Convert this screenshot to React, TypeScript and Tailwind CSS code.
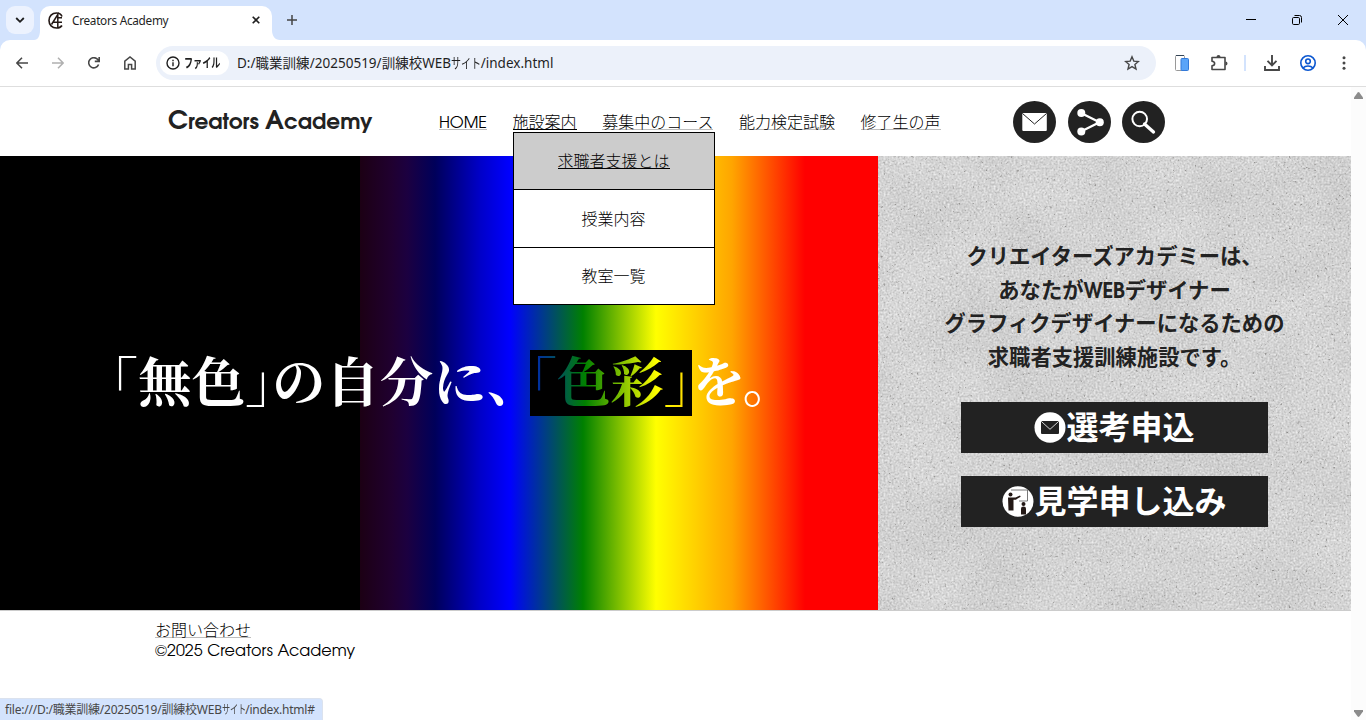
import React from "react";

const ui = "font-['Noto_Sans','Noto_Sans_CJK_JP',sans-serif]";
const gothic =
  "font-['Century_Gothic','URW_Gothic','TeX_Gyre_Adventor','Lato','Noto_Sans_CJK_JP',sans-serif]";

function TabStrip() {
  return (
    <div className="flex h-10 bg-[#d3e3fd] pl-1.5">
      <div className="mt-1.5 flex h-7 w-7 items-center justify-center rounded-[9px] bg-[#ecf2fe]">
        <svg width="10" height="8" viewBox="0 0 10 8" fill="none" stroke="#1f1f1f" strokeWidth="1.8">
          <path d="M1.2 2 5 5.8 8.800 2" />
        </svg>
      </div>
      <svg className="mt-[30px]" width="6" height="10" viewBox="0 0 6 10">
        <path d="M6 0v10H0c4 0 6-4 6-10Z" fill="#fff" />
      </svg>
      <div className="mt-1.5 flex h-[34px] w-[232px] items-center rounded-t-[10px] bg-white pb-1.5 pl-2">
        <svg width="16" height="17" viewBox="0 0 16 17" fill="none" stroke="#231815" strokeWidth="1.600">
          <path d="M14 4.500C13 1.800 11 1 8.500 1 4 1 1 4.300 1 8.500S4 16 8.500 16c2.500 0 4.500-1 5.500-2.500" />
          <path d="M3.500 12.500 9.800 2.500V16M4.500 10.300H14M10 5.700h4" strokeWidth="1.500" />
        </svg>
        <span className="ml-2 flex-1 pt-px text-[11.800px] tracking-[-0.3px] text-[#1f1f1f]">Creators Academy</span>
        <svg className="mr-3" width="8" height="8" viewBox="0 0 8 8" stroke="#1f1f1f" strokeWidth="1.600">
          <path d="m.7.7 6.600 6.600M7.300.7.7 7.300" />
        </svg>
      </div>
      <svg className="mt-[30px]" width="8" height="10" viewBox="0 0 8 10">
        <path d="M0 0v10h8C3 10 0 6 0 0Z" fill="#fff" />
      </svg>
      <svg className="ml-[7px] mt-[15px]" width="10" height="10" viewBox="0 0 10 10" stroke="#444" strokeWidth="1.500">
        <path d="M5 0v10M0 5h10" />
      </svg>
      <div className="ml-auto mr-[18px] flex h-10 items-center gap-9">
        <svg width="10" height="10" viewBox="0 0 10 10" stroke="#000">
          <path d="M0 4.500h10" />
        </svg>
        <svg width="10" height="10" viewBox="0 0 10 10" fill="none" stroke="#000">
          <rect x=".5" y="2.500" width="7" height="7" rx="1.200" />
          <path d="M2.500.5h5a2 2 0 0 1 2 2v5" />
        </svg>
        <svg width="10" height="10" viewBox="0 0 10 10" stroke="#000">
          <path d="m0 0 10 10M10 0 0 10" />
        </svg>
      </div>
    </div>
  );
}

function Toolbar() {
  return (
    <div className="bg-[#d3e3fd]">
      <div className="flex h-[47px] items-center rounded-t-[10px] border-b border-[#dedede] bg-white pl-4 text-[#474747]">
        <svg width="12" height="12" viewBox="0 0 12 12" fill="none" stroke="#474747" strokeWidth="1.500">
          <path d="M12 6H1M6 .7.900 6 6 11.300" />
        </svg>
        <svg className="ml-6" width="12" height="12" viewBox="0 0 12 12" fill="none" stroke="#b0b0b0" strokeWidth="1.500">
          <path d="M0 6h11M6 .7 11.100 6 6 11.300" />
        </svg>
        <svg className="ml-6" width="12" height="12" viewBox="0 0 12 12" fill="none" stroke="#474747" strokeWidth="1.600">
          <path d="M10.600 7.500A5.100 5.100 0 1 1 9.800 2.600L11 4M11.200 0v4.400H6.800" />
        </svg>
        <svg className="ml-6" width="12" height="14" viewBox="0 0 12 14" fill="none" stroke="#474747" strokeWidth="1.500">
          <path d="M.8 13V5.200L6 1l5.200 4.200V13H7.600V8.500H4.400V13H.8Z" />
        </svg>
        <div className="ml-5 flex h-[34px] w-[1000px] items-center rounded-full bg-[#ecf1fa] pl-1">
          <div className="flex h-6 w-[69px] shrink-0 items-center rounded-full bg-white pl-1.5 text-[#1f1f1f]">
            <svg className="shrink-0" width="14" height="14" viewBox="0 0 14 14" fill="none" stroke="#1f1f1f" strokeWidth="1.400">
              <circle cx="7" cy="7" r="6" />
              <path d="M7 6.200V10.200M7 3.700v1.500" />
            </svg>
            <span className={`${ui} ml-1 w-9 origin-left scale-x-[0.7] whitespace-nowrap text-[13px] font-bold`}>ファイル</span>
          </div>
          <span className="ml-2 flex-1 whitespace-nowrap text-[13.500px] tracking-[0.02px] text-[#1f1f1f]">
            D:/職業訓練/20250519/訓練校WEB
            <span className="-mr-[11px] inline-block origin-left scale-x-[0.74]">サイト</span>
            /index.html
          </span>
          <svg className="mr-4" width="16" height="16" viewBox="0 0 16 16" fill="none" stroke="#474747" strokeWidth="1.400">
            <path d="m8 1.800 1.800 4.300 4.600.4-3.500 3 1.100 4.600L8 11.600 4 14.100l1.100-4.600-3.500-3 4.600-.4Z" />
          </svg>
        </div>
        <svg className="ml-[19px]" width="14" height="16" viewBox="0 0 14 16">
          <rect x=".5" y=".5" width="9" height="15" rx="1" fill="#fff" stroke="#999" />
          <path d="M1 .5h8" stroke="#345" />
          <rect x="6" y="3.500" width="7.500" height="12" rx="1" fill="#5aa4f8" stroke="#3379d8" />
        </svg>
        <svg className="ml-[21px]" width="18" height="18" viewBox="0 0 18 18" fill="none">
          <path d="M2 3.500h13V9v6.500H2v-3.700c3.500-.3 3.500-4.200 0-4.500Z" stroke="#474747" strokeWidth="1.600" strokeLinejoin="round" />
          <path d="M6.500 3a2 2 0 0 1 4 0ZM15.500 7.500a2 2 0 0 1 0 4Z" fill="#474747" />
        </svg>
        <div className="ml-4 h-4 w-0.5 bg-[#d3e3fd]" />
        <svg className="ml-[18px]" width="16" height="16" viewBox="0 0 16 16" fill="none" stroke="#474747" strokeWidth="1.900">
          <path d="M8 0v10M3.500 5.800 8 10.300l4.500-4.500M1 11v4h14v-4" />
        </svg>
        <svg className="ml-5" width="16" height="16" viewBox="0 0 16 16" fill="none" stroke="#0b57d0" strokeWidth="1.600">
          <circle cx="8" cy="8" r="7.200" />
          <circle cx="8" cy="6.300" r="2.300" />
          <path d="M3 13c2.500-2.700 7.500-2.700 10 0" />
        </svg>
        <svg className="ml-[26px]" width="4" height="14" viewBox="0 0 4 14" fill="#474747">
          <circle cx="2" cy="1.700" r="1.500" />
          <circle cx="2" cy="7" r="1.500" />
          <circle cx="2" cy="12.300" r="1.500" />
        </svg>
      </div>
    </div>
  );
}

const navLink = "block h-[18px] whitespace-nowrap border-b text-[16px] leading-[23px]";

function SiteHeader() {
  return (
    <header className="flex h-[69px] pl-[168px] text-black">
      <h1 className="w-[271px] whitespace-nowrap pt-[17px] text-[21.600px] font-bold leading-9 text-[#222]">
        <span className="text-[25.600px]">C</span>reators <span className="text-[25.600px]">A</span>cademy
      </h1>
      <nav className="flex items-start gap-[25.600px] pt-[25px] font-light">
        <a className={`${navLink} w-12 border-[#bdbdbd] tracking-[-0.1px]`}>HOME</a>
        <div className="relative">
          <a className={`${navLink} border-black`}>施設案内</a>
          <ul className="absolute left-0 top-[20px] z-10 w-[202px] border border-black bg-white text-center text-[16px] leading-6">
            <li className="flex h-[57px] items-center justify-center border-b border-black bg-[#ccc]">
              <span className={`${navLink} mb-0.5 border-black`}>求職者支援とは</span>
            </li>
            <li className="flex h-[58px] items-center justify-center border-b border-black pt-1">授業内容</li>
            <li className="flex h-14 items-center justify-center pt-1">教室一覧</li>
          </ul>
        </div>
        <a className={`${navLink} border-[#bdbdbd]`}>募集中のコース</a>
        <a className={`${navLink} border-[#bdbdbd]`}>能力検定試験</a>
        <a className={`${navLink} border-[#bdbdbd]`}>修了生の声</a>
      </nav>
      <div className="ml-[72.600px] flex gap-[11.500px] pt-3.5">
        <svg width="43" height="42" viewBox="0 0 43 42">
          <ellipse cx="21.500" cy="21" rx="21.500" ry="21" fill="#222" />
          <rect x="9.300" y="12" width="24.500" height="18" rx="1" fill="#fff" />
          <path d="m9.500 12.500 12 10.500 12-10.500" fill="none" stroke="#222" />
        </svg>
        <svg width="43" height="42" viewBox="0 0 43 42" fill="#fff">
          <ellipse cx="21.500" cy="21" rx="21.500" ry="21" fill="#222" />
          <path d="m13.500 12.200 18 9-18 9" fill="none" stroke="#fff" strokeWidth="2.300" />
          <circle cx="13.300" cy="12" r="4" />
          <circle cx="31.800" cy="21.300" r="4" />
          <circle cx="13.300" cy="30.500" r="4" />
        </svg>
        <svg width="43" height="42" viewBox="0 0 43 42" fill="none" stroke="#fff">
          <ellipse cx="21.500" cy="21" rx="21.500" ry="21" fill="#222" stroke="none" />
          <circle cx="17.700" cy="18" r="7.300" strokeWidth="2" />
          <path d="m22.500 23 9 8" strokeWidth="3.300" strokeLinecap="round" />
        </svg>
      </div>
    </header>
  );
}

const clip =
  "bg-[linear-gradient(90deg,#00f_-20px,#008000_55px,#ff0_127px,#ffa500_202px)] bg-clip-text text-transparent";

function Spectrum() {
  return (
    <section className="w-[878px] bg-[linear-gradient(90deg,#000_360px,#1c0014_360px,#200030_392px,#1c0040_407px,#00005a_435px,#0000c8_480px,#00f_510px,#008000_583px,#ff0_656px,#ffa500_732px,#f00_805px)] pt-[194px]">
      <p className="flex h-[66px] items-center whitespace-nowrap pl-[111px] font-['Noto_Serif_CJK_JP','Noto_Serif_JP','Source_Han_Serif','IPAMincho','Noto_Sans_CJK_JP',serif] text-[53.500px] font-bold leading-[58px] text-white [font-feature-settings:'halt']">
        <span className="-mt-2 w-[419px] tracking-[0.150px]">「無色」の自分に、</span>
        <span className="h-[66px] w-[162px] bg-black">
          <span className={`${clip} block h-[66px]`}>「色彩」</span>
        </span>
        <span className="-mt-2 tracking-[-3px]">を。</span>
      </p>
    </section>
  );
}

function Concrete() {
  return (
    <svg className="absolute inset-0" width="473" height="454" viewBox="0 0 473 454">
      <filter id="grain" x="0" y="0" width="100%" height="100%" colorInterpolationFilters="sRGB">
        <feTurbulence type="fractalNoise" baseFrequency="0.5" numOctaves="3" seed="4" />
        <feColorMatrix values=".3 .1 0 0 .63  .3 .1 0 0 .63  .3 .1 0 0 .63  0 0 0 0 1" />
      </filter>
      <filter id="stain" x="0" y="0" width="100%" height="100%" colorInterpolationFilters="sRGB">
        <feTurbulence type="fractalNoise" baseFrequency="0.012 0.015" numOctaves="6" seed="7" />
        <feColorMatrix values="1 0 0 0 .28  1 0 0 0 .28  1 0 0 0 .28  0 0 0 0 .08" />
      </filter>
      <filter id="pits" x="0" y="0" width="100%" height="100%" colorInterpolationFilters="sRGB">
        <feTurbulence type="fractalNoise" baseFrequency="0.36" numOctaves="2" seed="21" />
        <feColorMatrix values="0 0 0 0 .35  0 0 0 0 .34  0 0 0 0 .33  6 0 0 0 -4.100" />
      </filter>
      <rect width="473" height="454" filter="url(#grain)" />
      <rect width="473" height="454" filter="url(#stain)" />
      <rect width="473" height="454" filter="url(#pits)" opacity=".5" />
    </svg>
  );
}

function Intro() {
  return (
    <section className="relative w-[473px] bg-[#d0d0d0]">
      <Concrete />
      <div className="relative flex flex-col items-center pt-[86px] text-[#222]">
        <p className="whitespace-nowrap text-center text-[21.300px] font-bold leading-[33.600px]">
          クリエイターズアカデミーは、
          <br />
          あなたが<span className="tracking-[-0.5px]">WEB</span>デザイナー
          <br />
          グラフィクデザイナーになるための
          <br />
          求職者支援訓練施設です。
        </p>
        <a className="mt-[25.600px] flex h-[51px] w-[307px] items-center justify-center bg-[#222] text-[32px] font-bold leading-[51px] text-white">
          <svg width="32" height="31" viewBox="0 0 32 31">
            <ellipse cx="16" cy="15.500" rx="15.500" ry="15.300" fill="#fff" />
            <rect x="7" y="9" width="18" height="13" rx="1" fill="#222" />
            <path d="m7.200 9.300 8.800 8 8.800-8" fill="none" stroke="#fff" strokeWidth=".8" />
          </svg>
          <span className="pt-1.5">選考申込</span>
        </a>
        <a className="mt-[23px] flex h-[51px] w-[307px] items-center justify-center bg-[#222] text-[32px] font-bold leading-[51px] text-white">
          <svg width="32" height="31" viewBox="0 0 32 31" fill="#231815">
            <ellipse cx="16" cy="15.500" rx="15.500" ry="15.300" fill="#fff" />
            <path d="M9 4h16.500v11H17" fill="none" stroke="#555" strokeWidth=".8" />
            <circle cx="8.500" cy="8.500" r="2" />
            <path d="M6 11.500h7.500l4.500-2 .7 1.300-5 3h-2.200V24.500H6.500Z" />
            <circle cx="21.500" cy="18" r="2" />
            <path d="M19 28.500v-6q0-2 2.500-2t2.500 2v6Z" />
          </svg>
          <span className="pt-1.5">見学申し込み</span>
        </a>
      </div>
    </section>
  );
}

export default function App() {
  return (
    <div className={`${ui} relative flex h-[720px] w-[1366px] flex-col overflow-hidden bg-white`}>
      <TabStrip />
      <Toolbar />
      <div className="flex flex-1">
        <div className={`${gothic} w-[1351px]`}>
          <SiteHeader />
          <main className="flex h-[455px] border-b border-[#ccc]">
            <Spectrum />
            <Intro />
          </main>
          <footer className="flex flex-col items-start pl-[155px] pt-[9px] text-[16px] font-light text-black">
            <a className={`${navLink} border-[#bdbdbd]`}>お問い合わせ</a>
            <p className="whitespace-nowrap pt-[3px] leading-[22px] tracking-[0.05px]">©2025 Creators Academy</p>
          </footer>
        </div>
        <div className="flex w-[15px] flex-col items-center justify-between bg-[#fcfcfc] pb-[3px] pt-[5px]">
          <svg width="9" height="7" viewBox="0 0 9 7" fill="#8b8b8b">
            <path d="M3.700.5Q4.500-.4 5.300.5L9 5.500V7H0V5.500Z" />
          </svg>
          <svg width="9" height="7" viewBox="0 0 9 7" fill="#8b8b8b">
            <path d="M3.700 6.500q.8.900 1.600 0L9 1.500V0H0v1.500Z" />
          </svg>
        </div>
      </div>
      <div className="absolute bottom-0 left-0 h-[22px] w-[323px] whitespace-nowrap rounded-tr-[4px] border-r border-t border-[#dbe2ee] bg-[#d3e3fd] pl-[5px] text-[12px] leading-[21px] tracking-[-0.22px] text-[#474747]">
        file:///D:/職業訓練/20250519/訓練校WEB
        <span className="-mr-[12px] inline-block origin-left scale-x-[0.68]">サイト</span>
        /index.html#
      </div>
    </div>
  );
}
